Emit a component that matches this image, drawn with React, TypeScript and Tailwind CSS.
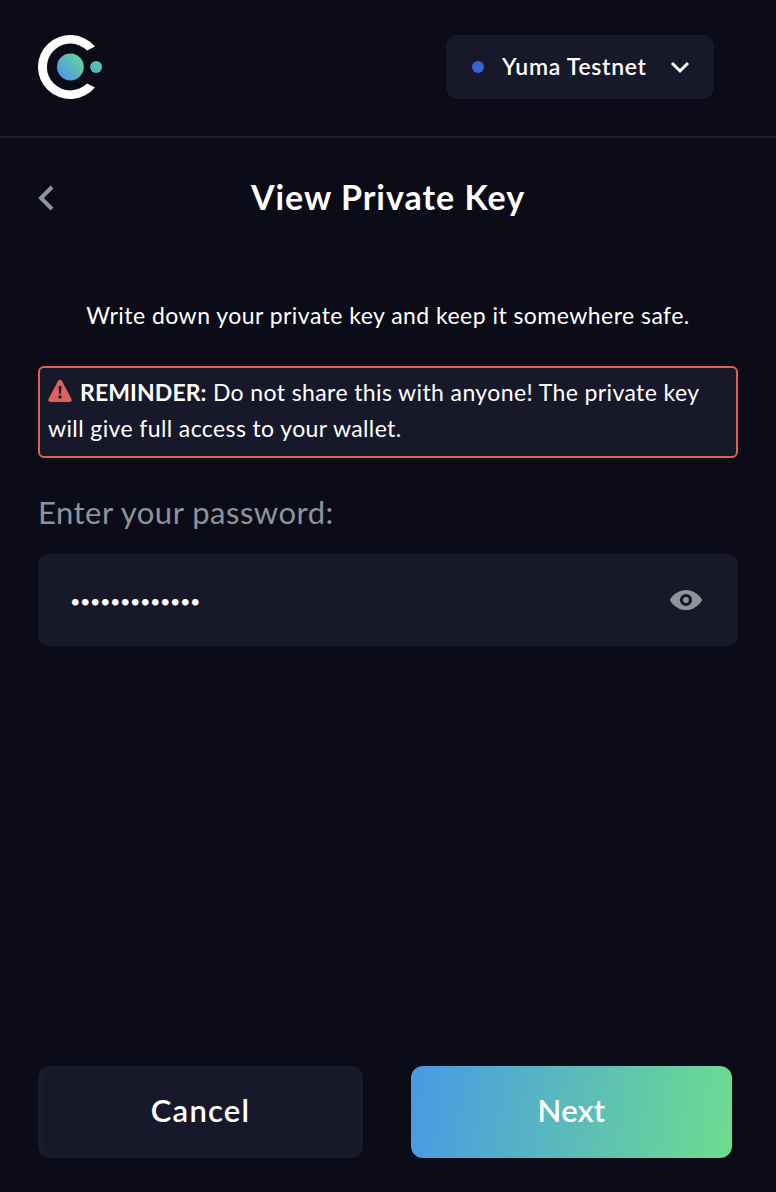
function Logo() {
  return (
    <svg width="66" height="64" viewBox="0 0 66 64" aria-hidden="true">
      <defs>
        <linearGradient id="core" x1="0" y1="1" x2="1" y2="0">
          <stop offset="0.1" stopColor="#4a97e6" />
          <stop offset="0.95" stopColor="#6bd894" />
        </linearGradient>
        <linearGradient id="satellite" x1="0" y1="1" x2="1" y2="0">
          <stop offset="0.1" stopColor="#4fb0c2" />
          <stop offset="0.95" stopColor="#5fc5a8" />
        </linearGradient>
      </defs>
      <path d="M57 11.4A32.3 32 0 1 0 57 52.6L49 48.4A23.4 23.4 0 1 1 49 15.6Z" fill="#fff" />
      <circle cx="32.4" cy="32" r="13.4" fill="url(#core)" />
      <circle cx="58.1" cy="32" r="6" fill="url(#satellite)" />
    </svg>
  );
}

function WarningIcon() {
  return (
    <svg className="mr-2 inline-block align-[-2px]" width="24" height="24" viewBox="0 0 24 24" aria-hidden="true">
      <path d="M10 2.1Q12-.7 14 2.1L23.4 19.7Q24.4 22.9 21.5 23H2.5Q-.4 22.9.6 19.7Z" fill="#dd615d" />
      <path d="M10.7 7h2.7l-.4 7.7h-1.9z" fill="#18182b" />
      <circle cx="12" cy="18" r="1.8" fill="#18182b" />
    </svg>
  );
}

function EyeIcon() {
  return (
    <svg width="32" height="20" viewBox="0 0 32 20" aria-hidden="true">
      <path d="M.4 8.8C4 3.6 9.6 0 16 0s12 3.6 15.6 8.8q.8 1.2 0 2.4C28 16.4 22.4 20 16 20S4 16.4.4 11.2q-.8-1.2 0-2.4Z" fill="#8d949a" />
      <circle cx="16" cy="10" r="4.5" fill="none" stroke="#18182b" strokeWidth="3.2" />
    </svg>
  );
}

export default function App() {
  return (
    <div className="flex h-[1192px] w-[776px] flex-col bg-[#0c0b18] font-['Lato','Open_Sans',sans-serif] text-white">
      <header className="flex h-[138px] items-start justify-between border-b-2 border-[#1b1b2e] pl-[38px] pr-[62px] pt-[35px]">
        <Logo />
        <button className="flex h-16 w-[268px] items-center rounded-xl bg-[#18182b] pl-[26px] pr-6 text-[23px] font-semibold">
          <span className="h-3 w-3 rounded-full bg-[#3862d8]" />
          <span className="ml-[18px] pb-0.5 tracking-[0.7px]">Yuma Testnet</span>
          <svg className="ml-auto" width="20" height="14" viewBox="0 0 20 14" fill="none" stroke="#fff" strokeWidth="3">
            <path d="M2 3l8 8 8-8" />
          </svg>
        </button>
      </header>
      <main className="flex grow flex-col px-[38px] pb-[34px]">
        <div className="mt-9 flex h-12 items-center">
          <svg width="16" height="26" viewBox="0 0 16 26" fill="none" stroke="#8d949a" strokeWidth="4">
            <path d="M14 2L3 13l11 11" />
          </svg>
          <h1 className="-ml-4 grow pb-1 text-center text-[34px] font-bold tracking-[1px]">View Private Key</h1>
        </div>
        <p className="mt-[75px] text-center text-[23px] leading-9 tracking-[0.46px]">
          Write down your private key and keep it somewhere safe.
        </p>
        <p className="mt-[33px] h-[92px] rounded-md border-2 border-[#dd615d] bg-[#18182b] px-2 pt-1.5 text-[23px] leading-9 tracking-[0.39px]">
          <WarningIcon />
          <b className="tracking-[0.1px]">REMINDER:</b> Do not share this with anyone! The private key
          <br />
          will give full access to your wallet.
        </p>
        <label className="mt-[34px] text-[31px] leading-10 tracking-[0.5px] text-[#8d949a]">Enter your password:</label>
        <div className="mt-[22px] flex h-[92px] items-center justify-between rounded-[10px] bg-[#18182b] pl-8 pr-9">
          <span className="pt-0.5 text-[18px] tracking-[-0.44px]">•••••••••••••</span>
          <EyeIcon />
        </div>
        <div className="mt-auto flex gap-12 text-[31px] font-semibold">
          <button className="h-[92px] w-[325px] rounded-xl border-4 border-[#1b1b2e] bg-[#18182b] pb-1 tracking-[1.2px]">Cancel</button>
          <button className="h-[92px] w-[321px] rounded-xl bg-[linear-gradient(98deg,#4a9ae3_2%,#6bdb91_97%)] pb-1 tracking-[0.3px]">Next</button>
        </div>
      </main>
    </div>
  );
}
